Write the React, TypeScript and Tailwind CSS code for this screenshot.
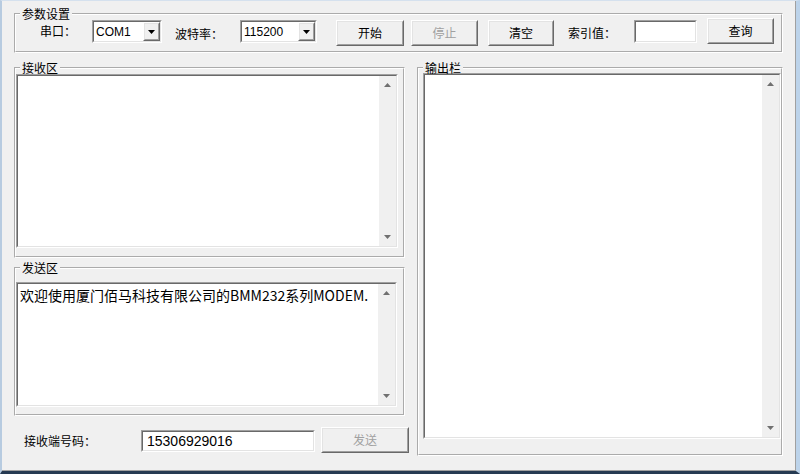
import React from "react";

const cjk = "font-['Noto_Sans_CJK_SC','Noto_Sans',sans-serif]";
const latin = "font-['Liberation_Sans','Noto_Sans_CJK_SC',sans-serif]";

type BoxProps = { className?: string; innerClassName?: string; children?: React.ReactNode };

// sunken 3D edit frame
const Sunken = ({ className = "", innerClassName = "", children }: BoxProps) => (
  <div className={`border border-t-[#a0a0a0] border-l-[#a0a0a0] border-r-white border-b-white ${className}`}>
    <div
      className={`flex h-full w-full border border-t-[#696969] border-l-[#696969] border-r-[#e3e3e3] border-b-[#e3e3e3] bg-white ${innerClassName}`}
    >
      {children}
    </div>
  </div>
);

const Raised = ({ className = "", innerClassName = "", children }: BoxProps) => (
  <div className={`border border-t-white border-l-white border-r-[#696969] border-b-[#696969] ${className}`}>
    <div
      className={`flex h-full w-full items-center justify-center border border-t-[#e3e3e3] border-l-[#e3e3e3] border-r-[#a0a0a0] border-b-[#a0a0a0] bg-[#f0f0f0] ${innerClassName}`}
    >
      {children}
    </div>
  </div>
);

const Button = ({ label, disabled = false, className = "" }: { label: string; disabled?: boolean; className?: string }) => (
  <Raised className={className}>
    <span className={`text-[12px] leading-[14px] ${disabled ? "text-[#a0a0a0]" : "text-black"}`}>{label}</span>
  </Raised>
);

const Arrow = ({ up = false, color = "#707070" }: { up?: boolean; color?: string }) => (
  <svg width="7" height="4" viewBox="0 0 7 4">
    <polygon points={up ? "3.5,0 7,4 0,4" : "0,0 7,0 3.5,4"} fill={color} />
  </svg>
);

const Combo = ({ value, className = "" }: { value: string; className?: string }) => (
  <Sunken className={className} innerClassName="items-stretch">
    <span className={`flex flex-1 items-center pl-[2px] text-[12px] ${latin}`}>{value}</span>
    <Raised className="w-[17px]">
      <Arrow color="#000000" />
    </Raised>
  </Sunken>
);

const ScrollBar = () => (
  <div className="flex h-full w-[17px] flex-col items-center justify-between bg-[#f0f0f0] py-[7px]">
    <Arrow up />
    <Arrow />
  </div>
);

const GroupBox = ({ title, className = "", children }: { title: string; className?: string; children?: React.ReactNode }) => (
  <fieldset className={`border-2 border-white [--tw-border-style:groove] [border-style:groove] ${className}`}>
    <legend className="ml-[4px] px-[2px] text-[12px] leading-[14px]">{title}</legend>
    {children}
  </fieldset>
);

const App = () => {
  return (
    <div
      className={`flex h-[474px] w-[800px] border-t border-l-2 border-r-4 border-b-[3px] border-t-[#d5e1ee] border-l-[#b7cbe0] border-r-[#bcd3ea] border-b-[#263a52] bg-[#f0f0f0] text-black ${cjk}`}
    >
      <div className="flex flex-1 flex-col border-r border-b border-r-[#a0a0a0] border-b-[#a0a0a0] pl-[12px]">
        {/* 参数设置 */}
        <GroupBox title="参数设置" className="mt-[6px] h-[46px] w-[769px]">
          <div className="-mt-[1px] flex h-[26px] items-start">
            <span className="ml-[24px] mt-[4px] w-[52px] text-[12px] leading-[13px]">串口：</span>
            <Combo value="COM1" className="h-[23px] w-[70px]" />
            <span className="ml-[13px] mt-[7px] w-[65px] text-[12px] leading-[14px]">波特率：</span>
            <Combo value="115200" className="h-[23px] w-[77px]" />
            <Button label="开始" className="ml-[19px] h-[26px] w-[68px]" />
            <Button label="停止" disabled className="ml-[7px] h-[26px] w-[67px]" />
            <Button label="清空" className="ml-[10px] h-[26px] w-[66px]" />
            <span className="ml-[14px] mt-[6px] w-[66px] text-[12px] leading-[14px]">索引值：</span>
            <Sunken className="h-[23px] w-[63px]" />
            <Button label="查询" className="-mt-[2px] ml-[10px] h-[26px] w-[67px]" />
          </div>
        </GroupBox>

        <div className="flex">
          {/* left column */}
          <div className="flex w-[396px] flex-col">
            <GroupBox title="接收区" className="mt-[8px] h-[197px] w-[391px]">
              <Sunken className="-mt-[1px] h-[174px] w-[382px]">
                <div className="flex-1" />
                <ScrollBar />
              </Sunken>
            </GroupBox>

            <GroupBox title="发送区" className="mt-[3px] h-[155px] w-[391px]">
              <Sunken className="mt-[7px] h-[125px] w-[381px]">
                <div className="flex-1 pl-[2px] pt-[2px] text-[14px] leading-[18px]">
                  欢迎使用厦门佰马科技有限公司的BMM232系列MODEM.
                </div>
                <ScrollBar />
              </Sunken>
            </GroupBox>

            <div className="mt-[11px] flex h-[26px] items-start">
              <span className="ml-[10px] mt-[7px] w-[117px] text-[12px] leading-[14px]">接收端号码：</span>
              <Sunken className="mt-[3px] h-[22px] w-[174px]" innerClassName="items-center">
                <span className={`pl-[4px] text-[14px] ${latin}`}>15306929016</span>
              </Sunken>
              <Button label="发送" disabled className="ml-[6px] h-[26px] w-[88px]" />
            </div>
          </div>

          {/* right column */}
          <GroupBox title="输出栏" className="ml-[7px] mt-[8px] h-[395px] w-[366px]">
            <Sunken className="-mt-[2px] ml-[4px] h-[366px] w-[358px]">
              <div className="flex-1" />
              <ScrollBar />
            </Sunken>
          </GroupBox>
        </div>
      </div>
    </div>
  );
};

export default App;
